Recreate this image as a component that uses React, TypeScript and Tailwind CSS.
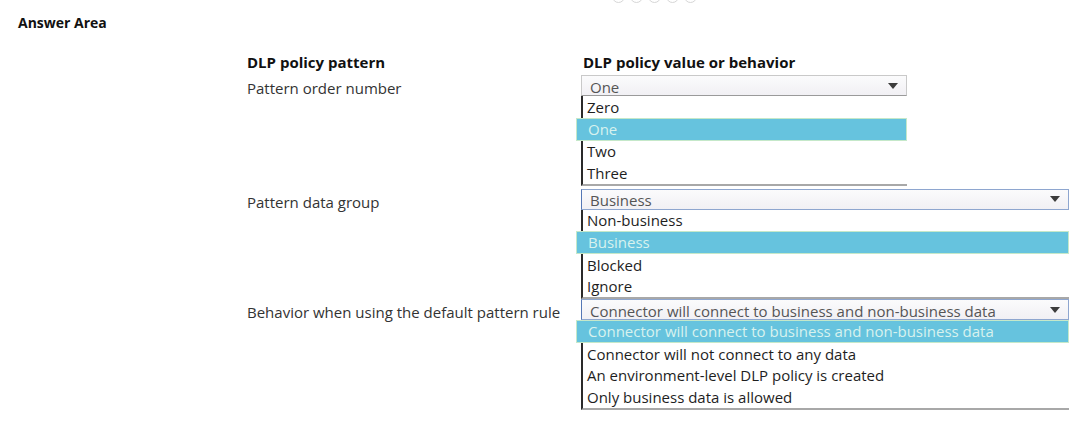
import React from 'react';

type Row = {
  label: string;
  value: string;
  options: string[];
  selected: number;
  width: string;
  blue?: boolean;
  gap?: string;
};

const ROWS: Row[] = [
  {
    label: 'Pattern order number',
    value: 'One',
    options: ['Zero', 'One', 'Two', 'Three'],
    selected: 1,
    width: 'w-[326px]',
    gap: 'mb-[3px]',
  },
  {
    label: 'Pattern data group',
    value: 'Business',
    options: ['Non-business', 'Business', 'Blocked', 'Ignore'],
    selected: 1,
    width: 'w-[488px]',
    blue: true,
  },
  {
    label: 'Behavior when using the default pattern rule',
    value: 'Connector will connect to business and non-business data',
    options: [
      'Connector will connect to business and non-business data',
      'Connector will not connect to any data',
      'An environment-level DLP policy is created',
      'Only business data is allowed',
    ],
    selected: 0,
    width: 'w-[488px]',
    blue: true,
  },
];

const Arrow = () => (
  <svg width="10" height="6" viewBox="0 0 10 6" className="shrink-0">
    <path d="M0 0 H10 L5 6 Z" fill="#3c3c3c" />
  </svg>
);

// An open select box with its option list hanging below
const OpenSelect: React.FC<{ row: Row }> = ({ row }) => (
  <div className={`${row.width} ${row.gap ?? ''}`}>
    <div
      className={`flex h-[21px] items-center justify-between border bg-gradient-to-b from-[#fbfbfc] to-[#f1f0f4] pl-[8px] pr-[8px] ${
        row.blue ? 'border-[#8ea6cf] border-l-[#5577b5]' : 'border-[#c9c9c9] border-b-[#9a9a9a]'
      }`}
    >
      <span className="pt-[3px] leading-none text-[#555]">{row.value}</span>
      <Arrow />
    </div>
    <div className="border-l-2 border-b-2 border-l-[#2a2a2a] border-b-[#a8a8a8]">
      {row.options.map((opt, i) =>
        i === row.selected ? (
          <div
            key={opt}
            className="-ml-[7px] flex h-[23px] items-center border border-[#c5e8c9] bg-[#66c3de] pl-[11px] text-[#d8f2ee]"
          >
            {opt}
          </div>
        ) : (
          <div key={opt} className="flex h-[21.5px] items-center pl-[4px] text-[#1e1e1e]">
            {opt}
          </div>
        ),
      )}
    </div>
  </div>
);

export default function App() {
  return (
    <div
      className="relative h-[421px] w-[1080px] overflow-hidden bg-white text-[15px]"
      style={{ fontFamily: '"Open Sans", "Noto Sans", sans-serif' }}
    >
      {/* clipped pager dots at the top edge */}
      <div className="absolute -top-[10px] left-[612px] flex gap-[5px]">
        {[0, 1, 2, 3, 4].map((d) => (
          <div key={d} className="h-[13px] w-[13px] rounded-full border border-[#d6d6d6]" />
        ))}
      </div>

      <div className="pl-[18px] pt-[12px] text-[14px] font-bold text-[#111]">Answer Area</div>

      <div className="ml-[247px] mt-[20px] grid grid-cols-[334px_auto]">
        <div className="pb-[4px] text-[15px] font-bold leading-[18px] text-[#111]">DLP policy pattern</div>
        <div className="pb-[4px] pl-[2px] text-[15px] font-bold leading-[18px] text-[#111]">
          DLP policy value or behavior
        </div>

        {ROWS.map((row) => (
          <React.Fragment key={row.label}>
            <div className="pt-[4px] leading-[18px] text-[#333]">{row.label}</div>
            <OpenSelect row={row} />
          </React.Fragment>
        ))}
      </div>
    </div>
  );
}
